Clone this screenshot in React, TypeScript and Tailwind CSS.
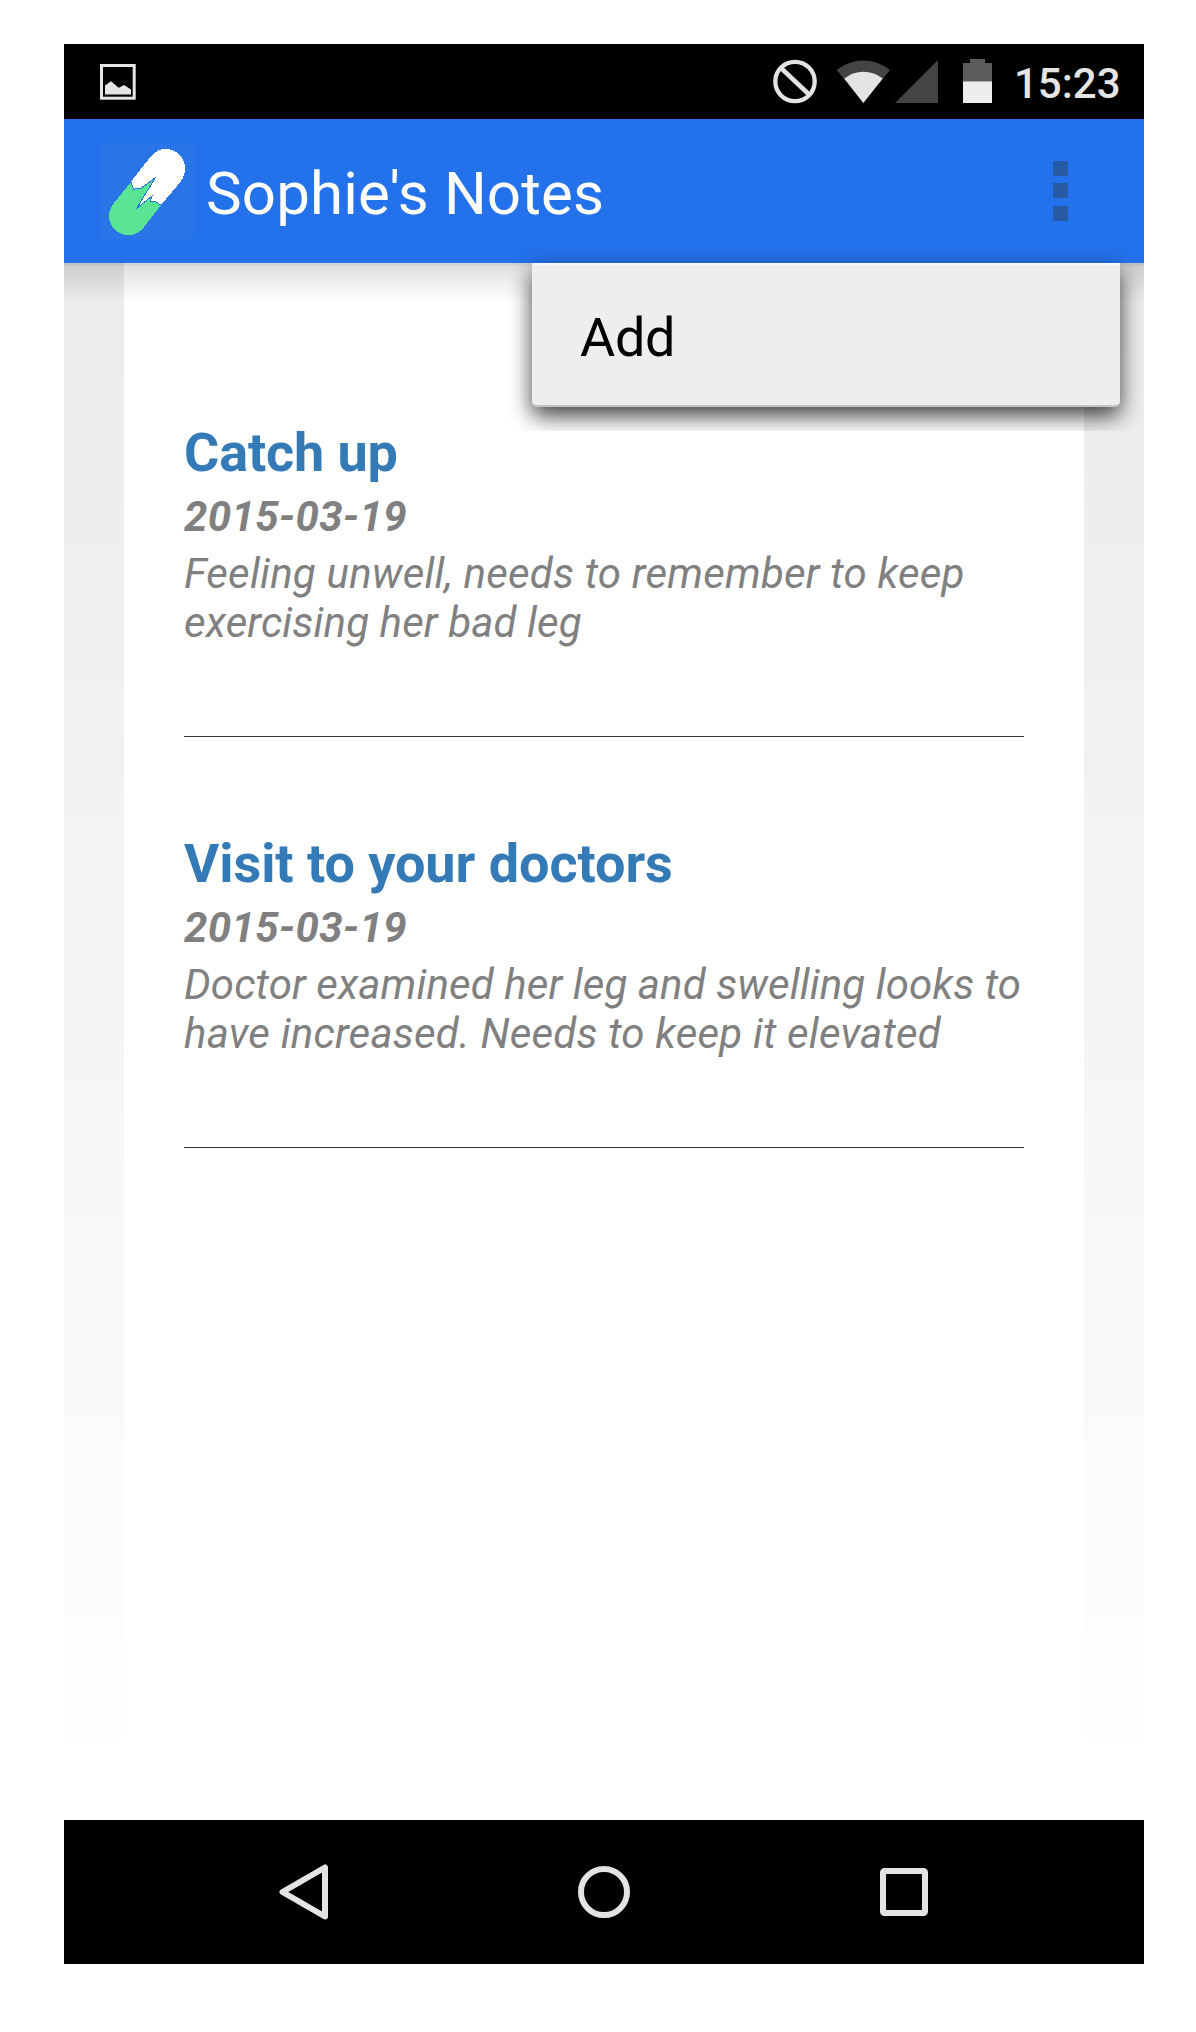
const notes = [
  {
    title: "Catch up",
    titleTracking: "tracking-[-0.15px]",
    date: "2015-03-19",
    lines: [
      { text: "Feeling unwell, needs to remember to keep", tracking: "tracking-[0.21px]" },
      { text: "exercising her bad leg", tracking: "tracking-[0.12px]" },
    ],
  },
  {
    title: "Visit to your doctors",
    titleTracking: "tracking-[-0.06px]",
    date: "2015-03-19",
    lines: [
      { text: "Doctor examined her leg and swelling looks to", tracking: "tracking-[0.1px]" },
      { text: "have increased. Needs to keep it elevated", tracking: "tracking-[0.2px]" },
    ],
  },
];

function StatusBar() {
  return (
    <div className="flex h-[75px] justify-between bg-black">
      <svg className="ml-[34px] mt-[19px]" width="40" height="40" viewBox="0 0 40 40">
        <rect x="3.500" y="2.500" width="32.700" height="32.700" fill="none" stroke="#e4e4e4" strokeWidth="3" />
        <path d="M7 31.500V22.500L13 18.200L20.700 24.700L26 22L33 26.500V31.500Z" fill="#e4e4e4" />
      </svg>
      <div className="flex gap-[14px] pr-6">
        <svg width="240" height="75" viewBox="760 44 240 75">
          <circle cx="795" cy="81.500" r="19.700" fill="none" stroke="#e4e4e4" strokeWidth="4.300" />
          <path d="M781.500 68.500L808.500 94" stroke="#e4e4e4" strokeWidth="4.500" />
          <path d="M863.300 103L836.700 70A42.500 42.500 0 0 1 890 70Z" fill="#444" />
          <path d="M863.300 103L844.300 78.500A31 31 0 0 1 882.700 78.500Z" fill="#e4e4e4" />
          <path d="M895 103H938V60Z" fill="#444" />
          <path d="M963 82V63H970V59H985V63H992V82Z" fill="#5c5c5c" />
          <rect x="963" y="81" width="29" height="22" fill="#eee" />
          <rect x="963" y="81" width="29" height="1" fill="#aaa" />
        </svg>
        <div className="mt-[15px] w-[106px] pr-0.5 text-right text-[42px] leading-[49px] font-medium whitespace-nowrap text-[#e4e4e4]">
          15:23
        </div>
      </div>
    </div>
  );
}

function ActionBar() {
  return (
    <div className="flex h-36 items-center bg-[#2472eb] pl-[37px]">
      <svg width="93" height="96" viewBox="101 143 93 96" shapeRendering="crispEdges">
        <rect x="101" y="143" width="93" height="96" fill="#2974e6" />
        <path d="M131 181.500L150 157.500C156 150 161 149 166 149C177 149 185 158 185 168C185 174 183.500 178 180 182.500L161 205L156 202L150.500 201L151.500 196L137 207.500L155.500 178L140 189L137 188L133.500 189.500Z" fill="#fff" />
        <path d="M131 182L133.500 189.500L137 188L140 189L155.500 178L136.500 208L152 196L150.500 201L156 202L161 205L144 227C139 233 134 235 128.500 235C117 235 109 226 109 216C109 210 111 207 114 203Z" fill="#59e594" />
        <path d="M131 182L133.500 189.500L137 188L140 189L155.500 177.500L136.500 208.500L152 196L150.500 201L156 202L161 205" fill="none" stroke="#2472d8" strokeWidth="1" />
      </svg>
      <h1 className="mt-1.5 ml-3 text-[60px] leading-[70px] font-normal tracking-[0.15px] text-white">Sophie's Notes</h1>
      <div className="mr-[76px] ml-auto flex flex-col">
        <div className="mb-[7px] size-[15px] bg-[#275aa4]" />
        <div className="mb-2 size-[15px] bg-[#275aa4]" />
        <div className="size-[15px] bg-[#275aa4]" />
      </div>
    </div>
  );
}

export default function App() {
  return (
    <div className="h-[2032px] w-[1196px] bg-white pt-11 pl-16 font-['Roboto',sans-serif]">
      <div className="flex h-[1920px] w-[1080px] flex-col">
        <StatusBar />
        <ActionBar />
        <main className="relative h-[1557px] bg-linear-to-b from-[#ebebeb] to-white to-98% px-[60px]">
          <div className="flex h-full flex-col gap-[95px] bg-white px-[60px] pt-[158px]">
            {notes.map((n) => (
              <article key={n.title} className="flex h-[316px] flex-col">
                <h2 className={`text-[54px] leading-[64px] font-bold text-[#337ab7] ${n.titleTracking}`}>{n.title}</h2>
                <p className="mt-[7px] text-[42px] leading-[49px] font-bold tracking-[0.4px] text-[#808080] italic">{n.date}</p>
                <div className="mt-2 text-[42px] leading-[49px] whitespace-nowrap text-[#808080] italic">
                  {n.lines.map((l) => (
                    <p key={l.text} className={l.tracking}>
                      {l.text}
                    </p>
                  ))}
                </div>
                <div className="mt-auto h-px bg-[#333]" />
              </article>
            ))}
          </div>
          <div className="absolute inset-x-0 top-0 h-[3px] bg-black/17" />
          <div className="absolute inset-x-0 top-[3px] h-9 bg-linear-to-b from-black/12 to-transparent" />
          <div className="absolute top-0 left-[468px] flex h-36 w-[588px] items-center rounded-b-[5px] border-t-2 border-b-2 border-t-[#f6f6f6] border-b-[#c4c4c4] bg-[#eee] pt-1.5 pl-12 text-[54px] leading-[64px] tracking-[-0.3px] text-black shadow-[0_9px_22px_rgba(0,0,0,0.75)] [clip-path:inset(-18px_-24px_-24px_-24px)]">
            Add
          </div>
        </main>
        <nav className="h-36 bg-black">
          <svg width="1080" height="144" viewBox="64 1820 1080 144" fill="none" stroke="#e4e4e4" strokeWidth="6" strokeLinejoin="round">
            <path d="M325 1867.500V1916.500L282.500 1892Z" />
            <circle cx="604" cy="1892" r="23" />
            <rect x="883" y="1871" width="42" height="42" rx="1.500" />
          </svg>
        </nav>
      </div>
    </div>
  );
}
